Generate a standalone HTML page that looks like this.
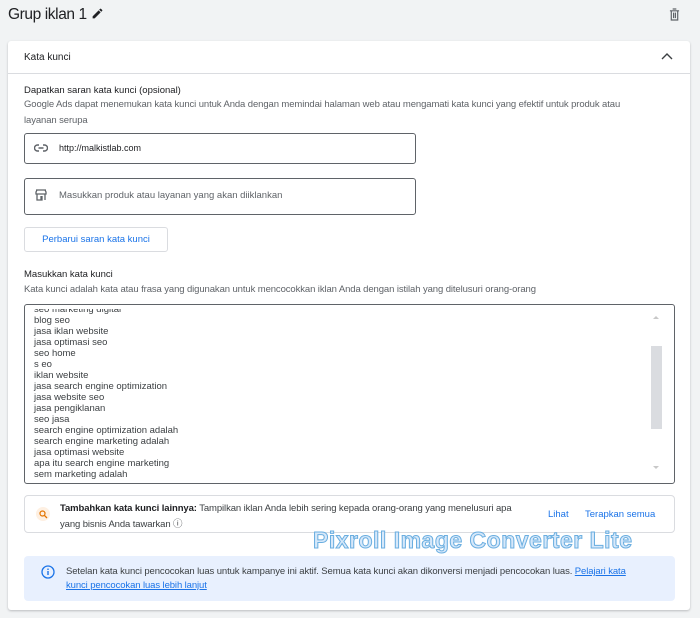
<!DOCTYPE html>
<html><head><style>
*{margin:0;padding:0;box-sizing:border-box}
body{width:700px;height:618px;background:#f1f3f4;font-family:"Liberation Sans",sans-serif;color:#3c4043;position:relative;overflow:hidden}
.a{position:absolute}
.t{font-size:9.5px;color:#5f6368;letter-spacing:-0.1px}
.kw div{height:11px;line-height:11px;font-size:9.5px;color:#3c4043}
</style></head><body>
<div class="a" style="left:8px;top:6px;font-size:15.5px;color:#202124;letter-spacing:-0.4px">Grup iklan 1</div>
<svg class="a" style="left:91px;top:7px" width="13" height="13" viewBox="0 0 24 24"><path d="M3 17.25V21h3.75L17.8 9.94l-3.75-3.75L3 17.25zM20.7 7.04a1 1 0 000-1.41l-2.34-2.34a1 1 0 00-1.41 0l-1.83 1.83 3.75 3.75 1.83-1.83z" fill="#202124"/></svg>
<svg class="a" style="left:669px;top:8px" width="11" height="13" viewBox="0 0 12 14"><path d="M1 3h10M4 1h4M2.5 3v10h7V3M5 5v6M7 5v6" stroke="#5f6368" stroke-width="1.3" fill="none"/></svg>
<div class="a" style="left:8px;top:41px;width:682px;height:569px;background:#fff;border-radius:3px;box-shadow:0 1px 2px rgba(60,64,67,.3)"></div>
<div class="a" style="left:8px;top:73px;width:682px;height:1px;background:#dadce0"></div>
<div class="a" style="left:24px;top:52px;font-size:10px;color:#202124">Kata kunci</div>
<svg class="a" style="left:661px;top:52px" width="12" height="8" viewBox="0 0 12 8"><path d="M1 7l5-5 5 5" stroke="#3c4043" stroke-width="1.4" fill="none"/></svg>
<div class="a" style="left:24px;top:85px;font-size:9.5px;color:#202124">Dapatkan saran kata kunci (opsional)</div>
<div class="a t" style="left:24px;top:97px;width:625px;line-height:16px">Google Ads dapat menemukan kata kunci untuk Anda dengan memindai halaman web atau mengamati kata kunci yang efektif untuk produk atau layanan serupa</div>
<div class="a" style="left:24px;top:133px;width:392px;height:31px;border:1px solid #5f6368;border-radius:3px"></div>
<svg class="a" style="left:34px;top:143px" width="14" height="10" viewBox="0 0 14 10"><path d="M5 2H3.5a3 3 0 000 6H5M9 2h1.5a3 3 0 010 6H9M4.5 5h5" stroke="#5f6368" stroke-width="1.4" fill="none"/></svg>
<div class="a" style="left:59px;top:143px;font-size:9px;color:#202124">http://malkistlab.com</div>
<div class="a" style="left:24px;top:178px;width:392px;height:37px;border:1px solid #5f6368;border-radius:3px"></div>
<svg class="a" style="left:35px;top:189px" width="12" height="12" viewBox="0 0 12 12"><path d="M1 1h10M1 3l1-2h8l1 2v2H1zM2 5v6h4V7h0M2 11h5V7M10 5v6" stroke="#5f6368" stroke-width="1.3" fill="none"/></svg>
<div class="a" style="left:59px;top:190px;font-size:9.5px;color:#5f6368">Masukkan produk atau layanan yang akan diiklankan</div>
<div class="a" style="left:24px;top:227px;width:144px;height:25px;border:1px solid #dadce0;border-radius:3px;font-size:9.5px;color:#1a73e8;text-align:center;line-height:23px">Perbarui saran kata kunci</div>
<div class="a" style="left:24px;top:269px;font-size:9.5px;color:#202124">Masukkan kata kunci</div>
<div class="a t" style="left:24px;top:284px">Kata kunci adalah kata atau frasa yang digunakan untuk mencocokkan iklan Anda dengan istilah yang ditelusuri orang-orang</div>
<div class="a" style="left:24px;top:304px;width:651px;height:180px;border:1px solid #5f6368;border-radius:3px;overflow:hidden">
<div class="a" style="left:0;top:4px;width:620px;height:172px;overflow:hidden">
<div class="kw a" style="left:9px;top:3px">
<div style="margin-top:-8px">seo marketing digital</div><div>blog seo</div><div>jasa iklan website</div><div>jasa optimasi seo</div><div>seo home</div><div>s eo</div><div>iklan website</div><div>jasa search engine optimization</div><div>jasa website seo</div><div>jasa pengiklanan</div><div>seo jasa</div><div>search engine optimization adalah</div><div>search engine marketing adalah</div><div>jasa optimasi website</div><div>apa itu search engine marketing</div><div>sem marketing adalah</div>
</div></div>
<div class="a" style="left:626px;top:41px;width:11px;height:83px;background:#dadce0"></div>
<div class="a" style="left:628px;top:8px;width:0;height:0;border:3.5px solid transparent;border-bottom-color:#c8c8c8"></div>
<div class="a" style="left:628px;top:161px;width:0;height:0;border:3.5px solid transparent;border-top-color:#c8c8c8"></div>
</div>
<div class="a" style="left:24px;top:495px;width:651px;height:38px;border:1px solid #dadce0;border-radius:4px"></div>
<div class="a" style="left:36px;top:507px;width:14px;height:14px;border-radius:50%;background:#fef0e2"></div>
<svg class="a" style="left:39px;top:510px" width="9" height="9" viewBox="0 0 9 9"><circle cx="3.5" cy="3.5" r="2.5" stroke="#e37400" stroke-width="1.2" fill="none"/><path d="M5.3 5.3L8 8" stroke="#e37400" stroke-width="1.3"/></svg>
<div class="a t" style="left:60px;top:501px;width:470px;line-height:16px;color:#3c4043"><b style="color:#202124">Tambahkan kata kunci lainnya:</b> Tampilkan iklan Anda lebih sering kepada orang-orang yang menelusuri apa yang bisnis Anda tawarkan ⓘ</div>
<div class="a" style="left:548px;top:509px;font-size:9.5px;color:#1a73e8">Lihat</div>
<div class="a" style="left:585px;top:509px;font-size:9.5px;color:#1a73e8">Terapkan semua</div>
<div class="a" style="left:313px;top:527px;font-size:23px;font-weight:bold;color:#d6e8fa;-webkit-text-stroke:1px #6aaee0;letter-spacing:0.5px">Pixroll Image Converter Lite</div>
<div class="a" style="left:24px;top:556px;width:651px;height:45px;background:#e8f0fe;border-radius:4px"></div>
<svg class="a" style="left:41px;top:565px" width="14" height="14" viewBox="0 0 14 14"><circle cx="7" cy="7" r="6" stroke="#1a73e8" stroke-width="1.3" fill="none"/><path d="M7 6v4" stroke="#1a73e8" stroke-width="1.4"/><circle cx="7" cy="4.2" r=".8" fill="#1a73e8"/></svg>
<div class="a t" style="left:66px;top:565px;width:576px;line-height:14px;color:#3c4043">Setelan kata kunci pencocokan luas untuk kampanye ini aktif. Semua kata kunci akan dikonversi menjadi pencocokan luas. <u style="color:#1a73e8">Pelajari kata kunci pencocokan luas lebih lanjut</u></div>
</body></html>
